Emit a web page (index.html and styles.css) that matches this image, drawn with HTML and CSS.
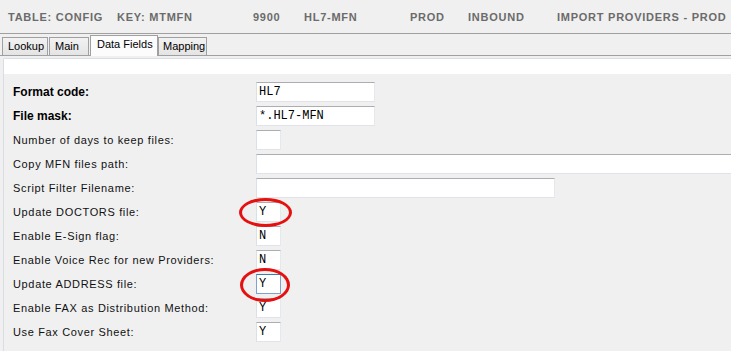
FILE: index.html
```html
<!DOCTYPE html>
<html>
<head>
<meta charset="utf-8">
<link rel="stylesheet" href="styles.css">
</head>
<body>
<div class="header">
  <span class="h h1">TABLE: CONFIG</span>
  <span class="h h2">KEY: MTMFN</span>
  <span class="h h3">9900</span>
  <span class="h h4">HL7-MFN</span>
  <span class="h h5">PROD</span>
  <span class="h h6">INBOUND</span>
  <span class="h h7">IMPORT PROVIDERS - PROD</span>
</div>
<div class="tabs">
  <div class="tab t-lookup">Lookup</div>
  <div class="tab t-main">Main</div>
  <div class="tab active t-data">Data Fields</div>
  <div class="tab t-map">Mapping</div>
</div>
<div class="panel">
  <div class="panel-top"></div>
  <div class="form">
    <div class="label bold">Format code:</div>
    <div class="field"><div class="inp w-code">HL7</div></div>

    <div class="label bold">File mask:</div>
    <div class="field"><div class="inp w-code">*.HL7-MFN</div></div>

    <div class="label">Number of days to keep files:</div>
    <div class="field"><div class="inp w-small"></div></div>

    <div class="label">Copy MFN files path:</div>
    <div class="field"><div class="inp w-full"></div></div>

    <div class="label">Script Filter Filename:</div>
    <div class="field"><div class="inp w-med"></div></div>

    <div class="label">Update DOCTORS file:</div>
    <div class="field"><div class="inp w-small">Y</div></div>

    <div class="label">Enable E-Sign flag:</div>
    <div class="field"><div class="inp w-small">N</div></div>

    <div class="label">Enable Voice Rec for new Providers:</div>
    <div class="field"><div class="inp w-small">N</div></div>

    <div class="label">Update ADDRESS file:</div>
    <div class="field"><div class="inp w-small focus">Y</div></div>

    <div class="label">Enable FAX as Distribution Method:</div>
    <div class="field"><div class="inp w-small">Y</div></div>

    <div class="label">Use Fax Cover Sheet:</div>
    <div class="field"><div class="inp w-small">Y</div></div>
  </div>
</div>
<div class="mark mark1"></div>
<div class="mark mark2"></div>
</body>
</html>
```
FILE: styles.css
```css
html, body {
  margin: 0;
  padding: 0;
  background: #f0f0f0;
  width: 731px;
  height: 351px;
  overflow: hidden;
  font-family: "Liberation Sans", Arial, sans-serif;
  position: relative;
}
.header {
  height: 34px;
  border-bottom: 1px solid #a0a0a0;
  box-sizing: border-box;
  display: flex;
  align-items: center;
  padding-left: 8px;
  padding-top: 1px;
  white-space: nowrap;
}
.h {
  font-size: 11px;
  font-weight: bold;
  color: #6b6b6b;
  letter-spacing: 0.75px;
}
.h1 { width: 109px; }
.h2 { width: 136px; }
.h3 { width: 51px; }
.h4 { width: 106px; }
.h5 { width: 58px; }
.h6 { width: 89px; }
.tabs {
  height: 22px;
  display: flex;
  align-items: flex-end;
  padding-left: 2px;
  border-bottom: 1px solid #a0a0a0;
  box-sizing: border-box;
}
.tab {
  height: 18px;
  box-sizing: border-box;
  border: 1px solid #a0a0a0;
  border-bottom: none;
  background: linear-gradient(#f2f2f2, #e4e4e4);
  font-size: 11px;
  color: #000;
  padding-left: 5px;
  line-height: 17px;
  margin-right: 1px;
}
.t-lookup { width: 46px; }
.t-main { width: 40px; }
.t-data { width: 68px; }
.t-map { width: 49px; padding-left: 4px; margin-left: -1px; }
.tab.active {
  height: 21px;
  background: #fcfcfc;
  padding-left: 6px;
  line-height: 16px;
  margin-bottom: -1px;
  position: relative;
}
.panel {
  margin-top: 2px;
  margin-left: 3px;
  border-left: 1px solid #d9dde2;
  border-top: 1px solid #d5dfe5;
  border-top-left-radius: 2px;
  height: 300px;
}
.panel-top {
  height: 15px;
  background: #ffffff;
}
.form {
  display: grid;
  grid-template-columns: 243px 1fr;
  grid-auto-rows: 24px;
  padding-left: 9px;
  padding-top: 8px;
}
.label {
  font-family: "Liberation Sans", Arial, sans-serif;
  font-size: 11px;
  color: #111;
  height: 20px;
  line-height: 20px;
  white-space: nowrap;
  letter-spacing: 0.65px;
}
.label.bold {
  font-weight: bold;
  font-size: 12px;
  letter-spacing: 0;
  color: #000;
}
.field {
  height: 20px;
}
.inp {
  height: 20px;
  box-sizing: border-box;
  background: #fff;
  border: 1px solid #e2e3ea;
  border-top-color: #abadb3;
  border-left-color: #dbdfe6;
  border-right-color: #e3e9ef;
  font-family: "Liberation Mono", "Courier New", monospace;
  font-size: 12px;
  line-height: 18px;
  padding-left: 2px;
  color: #000;
  white-space: nowrap;
  overflow: hidden;
}
.inp.focus {
  border-color: #7da2ce;
  border-top-color: #3d7bad;
}
.w-code { width: 119px; }
.w-small { width: 25px; }
.w-full { width: 490px; }
.w-med { width: 299px; }
.mark {
  position: absolute;
  box-sizing: border-box;
  border: 3px solid #e51010;
  border-radius: 50%;
}
.mark1 {
  left: 239px;
  top: 198px;
  width: 53px;
  height: 29px;
}
.mark2 {
  left: 240px;
  top: 268px;
  width: 50px;
  height: 34px;
}
```
